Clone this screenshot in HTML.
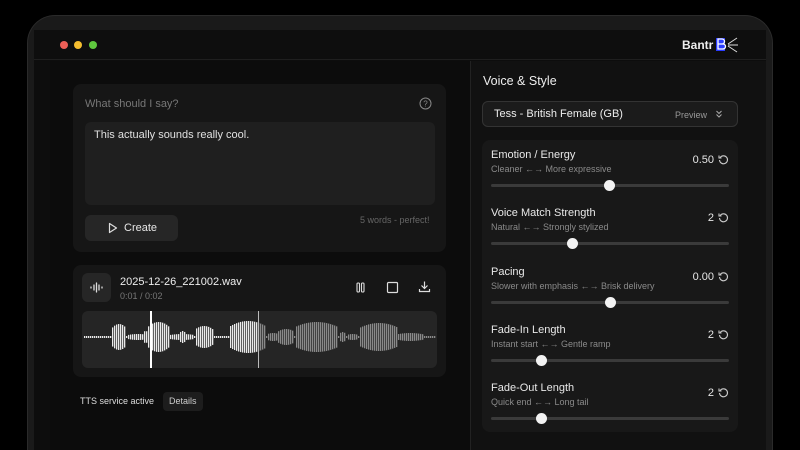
<!DOCTYPE html>
<html style="width:800px;height:450px;overflow:hidden"><head><meta charset="utf-8"><style>
*{box-sizing:border-box;margin:0;padding:0}
body{width:800px;height:450px;background:#000;overflow:hidden;position:relative;font-family:"Liberation Sans",sans-serif;color:#e6e6e6}
.frame{position:absolute;left:27px;top:15px;width:746px;height:435px;border-radius:28px 28px 0 0;background:#1a1a1a;border:1px solid #2a2a2a;border-bottom:none}
.screen{position:absolute;left:34px;top:30px;width:732px;height:420px;background:#0d0d0d}
.tb{position:absolute;left:0;top:0;width:732px;height:30px;border-bottom:1px solid #1f1f1f;background:#0e0e0e}
.dot{position:absolute;top:11px;width:8px;height:8px;border-radius:50%}
.abs{position:absolute}
.card{position:absolute;background:#161616;border-radius:8px}
.t{position:absolute;white-space:nowrap}
.row .title{font-size:11px;color:#e8e8e8}
.row .sub{font-size:9px;color:#8a8a8a}
.track{position:absolute;left:9px;width:238px;height:3px;background:#3a3a3a;border-radius:2px}
.thumb{position:absolute;width:11px;height:11px;border-radius:50%;background:#f2f2f2;top:-4px}
</style></head><body>
<div class="frame"></div>
<div class="screen">
 <div class="tb">
  <div class="dot" style="left:26px;background:#ed5f57"></div>
  <div class="dot" style="left:40px;background:#f4bd2f"></div>
  <div class="dot" style="left:55px;background:#5fc73e"></div>
  <div class="t" style="left:648px;top:8px;font-size:12px;font-weight:bold;color:#eee">Bantr</div>
  <svg class="abs" style="left:681px;top:6px" width="24" height="17" viewBox="0 0 24 17"><rect x="1" y="2" width="9" height="13" fill="#2a3cff"/><path d="M3 3h4a2.5 2.5 0 0 1 0 5H3zM3 8h5a2.5 2.5 0 0 1 0 5H3z" fill="none" stroke="#fff" stroke-width="1.3"/><path d="M13 8l9-6M13 9h10M13 10l9 6" stroke="#ddd" stroke-width="1"/></svg>
 </div>
</div>
<div class="abs" style="left:50px;top:61px;width:420px;height:389px;background:#0c0c0c"></div>
<div class="abs" style="left:470px;top:61px;height:389px;width:296px;background:#111;border-left:1px solid #222"></div>

<!-- card 1 -->
<div class="card" style="left:73px;top:84px;width:373px;height:168px"></div>
<div class="t" style="left:85px;top:98px;font-size:11px;color:#777">What should I say?</div>
<svg class="abs" style="left:419px;top:97px" width="13" height="13" viewBox="0 0 13 13"><circle cx="6.5" cy="6.5" r="5.5" fill="none" stroke="#888" stroke-width="1"/><text x="6.5" y="9.5" font-size="8" fill="#888" text-anchor="middle" font-family="Liberation Sans">?</text></svg>
<div class="abs" style="left:85px;top:122px;width:350px;height:83px;background:#1f1f1f;border-radius:6px"></div>
<div class="t" style="left:94px;top:129px;font-size:11px;color:#e0e0e0">This actually sounds really cool.</div>
<div class="abs" style="left:85px;top:215px;width:93px;height:26px;background:#262626;border-radius:6px"></div>
<svg class="abs" style="left:108px;top:222px" width="10" height="12" viewBox="0 0 10 12"><path d="M1.5 1.5L8.5 6L1.5 10.5Z" fill="none" stroke="#ddd" stroke-width="1.2" stroke-linejoin="round"/></svg>
<div class="t" style="left:124px;top:222px;font-size:11px;color:#e6e6e6">Create</div>
<div class="t" style="left:360px;top:215px;font-size:9px;color:#666">5 words - perfect!</div>

<!-- card 2 -->
<div class="card" style="left:73px;top:265px;width:373px;height:112px"></div>
<div class="abs" style="left:82px;top:273px;width:29px;height:29px;background:#262626;border-radius:6px"></div>
<svg class="abs" style="left:89px;top:280px" width="15" height="15" viewBox="0 0 15 15"><path d="M2 7v1M5 5v5M7.5 3v9M10 5v5M13 7v1" stroke="#ddd" stroke-width="1.3" stroke-linecap="round"/></svg>
<div class="t" style="left:120px;top:276px;font-size:11px;color:#eee">2025-12-26_221002.wav</div>
<div class="t" style="left:120px;top:291px;font-size:9px;color:#777">0:01 / 0:02</div>
<svg class="abs" style="left:354px;top:281px" width="13" height="13" viewBox="0 0 13 13"><rect x="3" y="2" width="2.5" height="9" rx="1" fill="none" stroke="#ddd" stroke-width="1.1"/><rect x="7.5" y="2" width="2.5" height="9" rx="1" fill="none" stroke="#ddd" stroke-width="1.1"/></svg>
<svg class="abs" style="left:386px;top:281px" width="13" height="13" viewBox="0 0 13 13"><rect x="1.5" y="1.5" width="10" height="10" rx="1" fill="none" stroke="#ddd" stroke-width="1.2"/></svg>
<svg class="abs" style="left:418px;top:280px" width="13" height="13" viewBox="0 0 13 13"><path d="M6.5 1.5v7M3.5 5.5l3 3 3-3M1.5 9v2.5h10V9" fill="none" stroke="#ddd" stroke-width="1.2"/></svg>
<div class="abs" style="left:82px;top:311px;width:355px;height:57px;background:#252525;border-radius:6px"></div>
<svg class="abs" id="wf" style="left:82px;top:311px" width="355" height="57"></svg>

<div class="t" style="left:80px;top:396px;font-size:9px;color:#ddd">TTS service active</div>
<div class="abs" style="left:163px;top:392px;width:40px;height:19px;background:#1d1d1d;border-radius:4px"></div>
<div class="t" style="left:169px;top:396px;font-size:9px;color:#ccc">Details</div>

<!-- right -->
<div class="t" style="left:483px;top:74px;font-size:12.5px;color:#eee">Voice &amp; Style</div>
<div class="abs" style="left:482px;top:101px;width:256px;height:26px;background:#1b1b1b;border:1px solid #333;border-radius:6px"></div>
<div class="t" style="left:494px;top:108px;font-size:11px;color:#eee">Tess - British Female (GB)</div>
<div class="t" style="left:675px;top:110px;font-size:9px;color:#999">Preview</div>
<svg class="abs" style="left:714px;top:109px" width="10" height="10" viewBox="0 0 10 10"><path d="M2.5 2l2.5 2.5L7.5 2M2.5 5.5L5 8l2.5-2.5" fill="none" stroke="#aaa" stroke-width="1"/></svg>
<div class="card" style="left:482px;top:140px;width:256px;height:292px;background:#181818"></div>
<div id="rows"></div>

<script>
var rows=[["Emotion / Energy","Cleaner \u2190\u2192 More expressive","0.50",609],["Voice Match Strength","Natural \u2190\u2192 Strongly stylized","2",572],["Pacing","Slower with emphasis \u2190\u2192 Brisk delivery","0.00",610],["Fade-In Length","Instant start \u2190\u2192 Gentle ramp","2",541],["Fade-Out Length","Quick end \u2190\u2192 Long tail","2",541]];
var h="";
rows.forEach(function(r,i){var y=149+i*58.3;
h+='<div class="row abs" style="left:482px;top:'+y+'px;width:256px;height:50px">'+
'<div class="t title" style="left:9px;top:0">'+r[0]+'</div><div class="t sub" style="left:9px;top:15px">'+r[1]+'</div>'+
'<div class="t" style="right:24px;top:5px;font-size:11px;color:#e6e6e6">'+r[2]+'</div>'+
'<svg class="abs" style="right:9px;top:5px" width="11" height="11" viewBox="0 0 11 11"><path d="M2.2 3.5A4 4 0 1 1 1.5 6" fill="none" stroke="#ccc" stroke-width="1.1"/><path d="M1 1.5v2.5h2.5" fill="none" stroke="#ccc" stroke-width="1.1"/></svg>'+
'<div class="track" style="top:35px"><div class="thumb" style="left:'+(r[3]-491-5)+'px"></div></div></div>';});
document.getElementById("rows").innerHTML=h;
var s="";
var segs=[[30,43,13],[46,65,3],[61,65,6],[66,86,15],[88,111,3],[98,102,6],[113,130,11],[148,183,16],[185,196,4],[196,211,8],[213,255,15],[258,262,5],[265,275,3],[278,315,14],[315,340,4]];
function amp(x){var a=1;segs.forEach(function(g){if(x>=g[0]&&x<=g[1]){var m=(g[0]+g[1])/2,w=(g[1]-g[0])/2+1;a=Math.max(a,g[2]*(1-0.35*Math.pow((x-m)/w,2)));}});return a;}
for(var x=2;x<353;x+=2){var a=amp(x);var c=x<176?"#eaeaea":"#8a8a8a";s+='<rect x="'+x+'" y="'+(26-a)+'" width="1.3" height="'+(2*a)+'" fill="'+c+'"/>';}
s+='<rect x="68" y="0" width="2" height="57" fill="#fff"/><rect x="176" y="0" width="1" height="57" fill="#bbb"/>';
document.getElementById("wf").innerHTML=s;
</script>
</body></html>
